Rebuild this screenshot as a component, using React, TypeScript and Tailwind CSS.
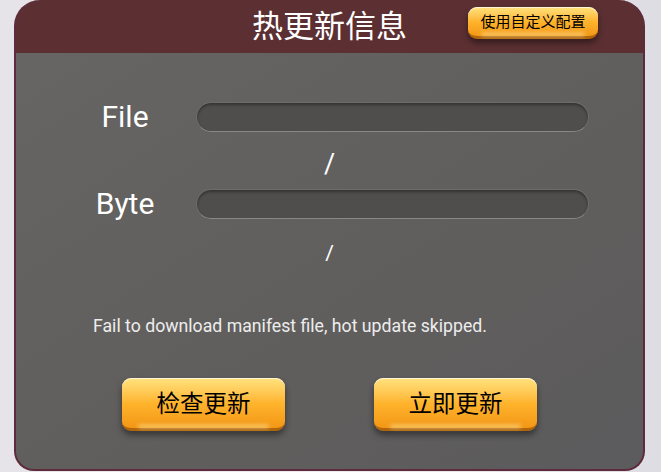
const cjk = "font-['Noto_Sans_CJK_SC',sans-serif]";
const latin = "font-['Roboto','Noto_Sans',sans-serif]";

const GoldButton = ({ label, className }: { label: string; className: string }) => (
  <button
    className={`relative flex items-center justify-center rounded-[9px] border-b-[3px] border-[#b0650c] bg-gradient-to-b from-[#ffe37c] via-[#ffb42c] to-[#f29716] text-black shadow-[0_4px_6px_rgba(0,0,0,0.45),inset_0_1px_0_rgba(255,255,255,0.7)] ${cjk} ${className}`}
  >
    <span className="pointer-events-none absolute inset-x-[10%] bottom-0 h-[3px] rounded-full bg-[#fff2b0] opacity-70 blur-[2px]" />
    <span className="relative">{label}</span>
  </button>
);

const Bar = () => (
  <div className="h-[30px] w-[393px] rounded-full border border-[#6e6c68] border-b-[#8a8884] bg-[#4f4e4c] shadow-[inset_0_2px_3px_rgba(0,0,0,0.35)]" />
);

const App = () => (
  <div className="h-[472px] w-[661px] overflow-hidden bg-gradient-to-r from-[#e6e4e8] via-[#eceaee] to-[#dedde3]">
    <div className="ml-[14px] flex h-[471px] w-[631px] flex-col overflow-hidden rounded-t-[26px] rounded-b-[20px] border-x-2 border-b-2 border-[#5e2b3d] bg-[#5c3033]">
      <div className="grid h-[53px] shrink-0 grid-cols-[1fr_auto_1fr] items-start">
        <div />
        <h1 className={`pt-[3px] text-[31px] leading-[42px] text-white ${cjk}`}>热更新信息</h1>
        <div className="flex justify-end pr-[45px] pt-[7px]">
          <GoldButton label="使用自定义配置" className="h-[32px] w-[130px] text-[15px]" />
        </div>
      </div>

      <div className="flex flex-1 flex-col bg-gradient-to-br from-[#666563] via-[#615f5d] to-[#5c5b5d]">
        <div className={`mt-[49px] flex items-center pl-[73px] ${latin}`}>
          <span className="w-[72px] text-center text-[30px] leading-[30px] text-white">File</span>
          <div className="ml-[35px]">
            <Bar />
          </div>
        </div>
        <div className={`flex h-[57px] items-center justify-center pt-[8px] text-[27px] text-white ${latin}`}>/</div>
        <div className={`flex items-center pl-[73px] ${latin}`}>
          <span className="w-[72px] text-center text-[30px] leading-[30px] text-white">Byte</span>
          <div className="ml-[35px]">
            <Bar />
          </div>
        </div>
        <div className={`flex h-[70px] items-center justify-center text-[21px] text-white ${latin}`}>/</div>

        <p className={`mt-[27px] pl-[77px] text-[17.7px] leading-[20px] text-[#ededed] ${latin}`}>
          Fail to download manifest file, hot update skipped.
        </p>

        <div className="mt-[42px] flex pl-[106px]">
          <GoldButton label="检查更新" className="h-[53px] w-[163px] text-[23.5px]" />
          <GoldButton label="立即更新" className="ml-[89px] h-[53px] w-[163px] text-[23.5px]" />
        </div>
      </div>
    </div>
  </div>
);

export default App;
